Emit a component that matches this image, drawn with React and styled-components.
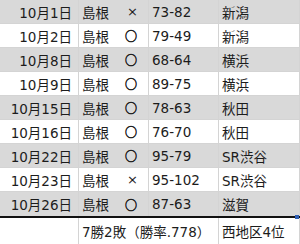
import React from 'react';
import styled, { createGlobalStyle } from 'styled-components';

const games = [
  { date: '10月1日', home: '島根', result: '×', score: '73-82', opp: '新潟' },
  { date: '10月2日', home: '島根', result: '○', score: '79-49', opp: '新潟' },
  { date: '10月8日', home: '島根', result: '○', score: '68-64', opp: '横浜' },
  { date: '10月9日', home: '島根', result: '○', score: '89-75', opp: '横浜' },
  { date: '10月15日', home: '島根', result: '○', score: '78-63', opp: '秋田' },
  { date: '10月16日', home: '島根', result: '○', score: '76-70', opp: '秋田' },
  { date: '10月22日', home: '島根', result: '○', score: '95-79', opp: 'SR渋谷' },
  { date: '10月23日', home: '島根', result: '×', score: '95-102', opp: 'SR渋谷' },
  { date: '10月26日', home: '島根', result: '○', score: '87-63', opp: '滋賀' },
];

const GlobalStyle = createGlobalStyle`
  html, body {
    margin: 0;
    padding: 0;
    background: #ffffff;
  }
  body {
    font-family: "DejaVu Sans", "Noto Sans CJK JP", sans-serif;
    font-size: 13.5px;
    color: #1c1c1c;
  }
`;

const Sheet = styled.div`
  position: relative;
  width: 300px;
`;

const Row = styled.div`
  display: grid;
  grid-template-columns: 79px 41px 29px 70px 81px;
  height: ${p => p.$height || 24}px;
  box-sizing: border-box;
  background: ${p => (p.$shaded ? '#d9d9d9' : '#ffffff')};
  border-bottom: ${p => p.$rule || '1px solid #d4d4d4'};
`;

const Cell = styled.div`
  display: flex;
  align-items: center;
  justify-content: ${p => (p.$right ? 'flex-end' : 'flex-start')};
  box-sizing: border-box;
  padding: ${p => (p.$right ? '0 6px 0 0' : '0 0 0 3px')};
  border-right: ${p => (p.$line ? '1px solid #d4d4d4' : 'none')};
  white-space: nowrap;
  overflow: visible;
  grid-column: ${p => p.$span || 'auto'};
`;

const Mark = styled(Cell)`
  padding-left: ${p => (p.$cross ? '7px' : '5px')};
  font-family: ${p => (p.$cross ? '"DejaVu Sans"' : '"Noto Sans CJK JP"')}, sans-serif;
  font-size: ${p => (p.$cross ? '13px' : '12px')};
  -webkit-text-stroke: ${p => (p.$cross ? '0' : '0.6px #1c1c1c')};
`;

const FillHandle = styled.div`
  position: absolute;
  right: 1px;
  top: 215px;
  width: 4px;
  height: 4px;
  background: #2f5fb3;
`;

export default function App() {
  return (
    <>
      <GlobalStyle />
      <Sheet>
        {games.map((g, i) => {
          const last = i === games.length - 1;
          return (
            <Row
              key={g.date}
              $shaded={i % 2 === 0}
              $height={last ? 26 : 24}
              $rule={last ? '2px solid #111' : undefined}
            >
              <Cell $right $line>{g.date}</Cell>
              <Cell>{g.home}</Cell>
              <Mark $line $cross={g.result === '×'}>{g.result}</Mark>
              <Cell $line>{g.score}</Cell>
              <Cell $line>{g.opp}</Cell>
            </Row>
          );
        })}
        <Row $height={26} $rule="none">
          <Cell $line />
          <Cell $line $span="2 / span 3">7勝2敗（勝率.778）</Cell>
          <Cell $line>西地区4位</Cell>
        </Row>
        <FillHandle />
      </Sheet>
    </>
  );
}
